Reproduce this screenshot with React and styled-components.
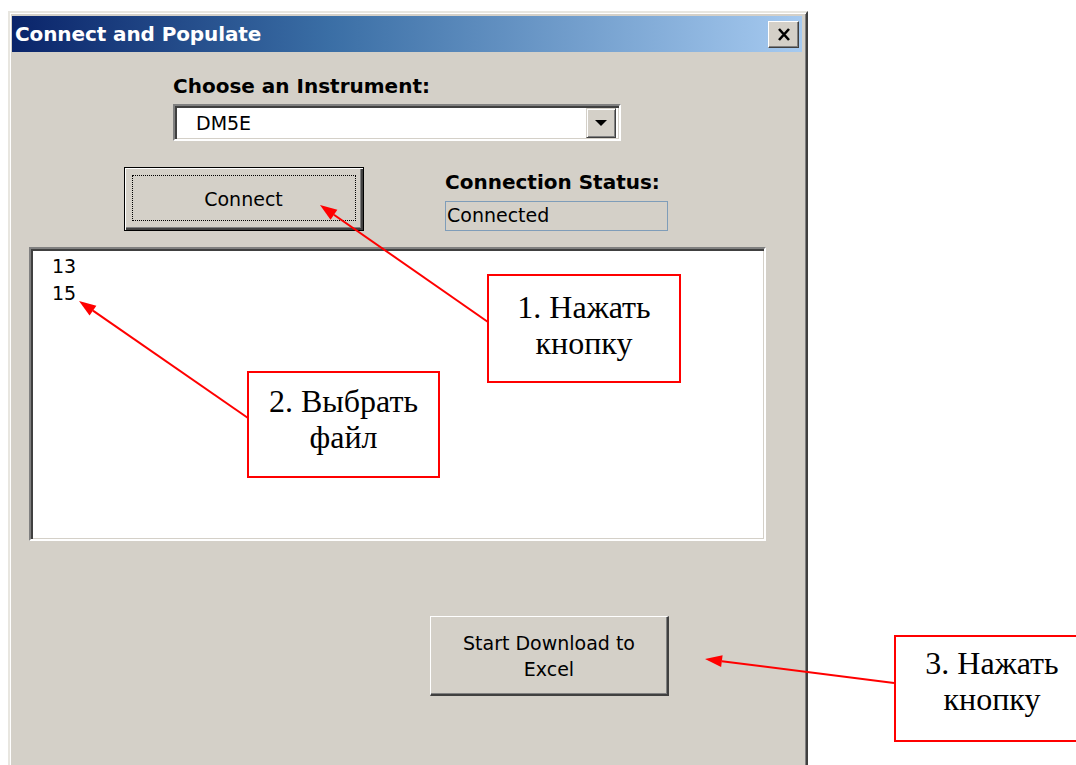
import React from "react";
import styled, { createGlobalStyle } from "styled-components";

const GlobalStyle = createGlobalStyle`
  html, body {
    margin: 0;
    padding: 0;
    background: #ffffff;
    overflow: hidden;
  }
  * { box-sizing: border-box; }
`;

const Page = styled.div`
  position: relative;
  width: 1076px;
  height: 765px;
  overflow: hidden;
  padding: 11px 0 0 8px;
  font-family: "DejaVu Sans", "Liberation Sans", sans-serif;
`;

/* ---------- dialog window ---------- */

const Window = styled.div`
  width: 800px;
  height: 780px;
  display: flex;
  flex-direction: column;
  background: #d4d0c8;
  border-style: solid;
  border-width: 2px;
  border-color: #e8e6e0 #404040 #404040 #e8e6e0;
  padding: 3px 4px 0 2px;
  box-shadow: inset 1px 1px 0 #ffffff, inset -1px 0 0 #808080;
`;

const TitleBar = styled.div`
  height: 36px;
  display: flex;
  align-items: center;
  justify-content: space-between;
  padding: 0 3px 0 3px;
  background: linear-gradient(to right, #0a246a 0%, #3a6ea5 40%, #a6caf0 100%);
`;

const Title = styled.span`
  color: #ffffff;
  font-weight: bold;
  font-size: 20px;
  letter-spacing: -0.1px;
`;

const CloseButton = styled.button`
  width: 31px;
  height: 27px;
  padding: 0;
  display: flex;
  align-items: center;
  justify-content: center;
  background: #d4d0c8;
  border-style: solid;
  border-width: 1px;
  border-color: #ffffff #404040 #404040 #ffffff;
  box-shadow: inset -1px -1px 0 #808080;
`;

const Client = styled.div`
  flex: 1;
  display: flex;
  flex-direction: column;
  align-items: flex-start;
`;

const FieldLabel = styled.div`
  font-weight: bold;
  font-size: 20px;
  line-height: 24px;
  color: #000;
  white-space: nowrap;
`;

const InstrumentBlock = styled.div`
  margin: 22px 0 0 161px;
  display: flex;
  flex-direction: column;
  gap: 6px;
`;

const Combo = styled.div`
  width: 448px;
  height: 37px;
  display: flex;
  align-items: center;
  justify-content: space-between;
  background: #ffffff;
  border-style: solid;
  border-width: 2px;
  border-color: #808080 #ffffff #ffffff #808080;
  box-shadow: inset 2px 2px 0 #404040, inset -1px -1px 0 #d4d0c8;
  padding: 0 3px 0 21px;
  font-size: 19px;
  color: #000;
`;

const DropButton = styled.div`
  width: 30px;
  height: 30px;
  display: flex;
  align-items: center;
  justify-content: center;
  background: #d4d0c8;
  border-style: solid;
  border-width: 1px;
  border-color: #d4d0c8 #404040 #404040 #d4d0c8;
  box-shadow: inset 1px 1px 0 #ffffff, inset -1px -1px 0 #808080;
`;

const Triangle = styled.span`
  width: 0;
  height: 0;
  border-left: 6px solid transparent;
  border-right: 6px solid transparent;
  border-top: 6px solid #000;
`;

const ConnectRow = styled.div`
  margin: 26px 0 0 112px;
  display: flex;
  align-items: flex-start;
`;

const PushButton = styled.button`
  width: ${(p) => p.$w}px;
  height: ${(p) => p.$h}px;
  padding: 0;
  background: #d4d0c8;
  font-family: "DejaVu Sans", "Liberation Sans", sans-serif;
  font-size: 19px;
  line-height: 26px;
  color: #000;
  text-align: center;
  border-style: solid;
  border-width: ${(p) => (p.$default ? "1px" : "1px 2px 2px 1px")};
  border-color: ${(p) =>
    p.$default ? "#000" : "#ffffff #404040 #404040 #ffffff"};
  box-shadow: ${(p) =>
    p.$default
      ? "inset 1px 1px 0 #ffffff, inset -2px -2px 0 #404040, inset -3px -3px 0 #808080"
      : "inset -1px -1px 0 #808080"};
  display: flex;
  align-items: center;
  justify-content: center;
`;

const FocusRing = styled.span`
  width: calc(100% - 14px);
  height: calc(100% - 16px);
  margin: -2px 0 0 -1px;
  border: 1px dotted #000;
  display: flex;
  align-items: center;
  justify-content: center;
  padding-top: 1px;
`;

const StatusGroup = styled.div`
  margin-left: 81px;
  padding-top: 3px;
  display: flex;
  flex-direction: column;
  gap: 7px;
`;

const StatusBox = styled.div`
  width: 223px;
  height: 30px;
  border: 1px solid #7f9db9;
  background: #d4d0c8;
  font-size: 19px;
  line-height: 27px;
  padding-left: 1px;
  color: #000;
`;

const ListBox = styled.div`
  margin: 16px 0 0 17px;
  width: 737px;
  height: 294px;
  background: #ffffff;
  border-style: solid;
  border-width: 2px;
  border-color: #808080 #ffffff #ffffff #808080;
  box-shadow: inset 2px 2px 0 #404040, inset -1px -1px 0 #d4d0c8;
  padding: 4px 0 0 21px;
`;

const ListItem = styled.div`
  font-size: 19px;
  line-height: 27px;
  color: #000;
`;

const Footer = styled.div`
  margin: 75px 0 0 418px;
`;

/* ---------- callouts drawn over the dialog ---------- */

const Overlay = styled.svg`
  position: absolute;
  left: 0;
  top: 0;
  width: 1076px;
  height: 765px;
  pointer-events: none;
`;

const Callout = styled.div`
  position: absolute;
  left: ${(p) => p.$x}px;
  top: ${(p) => p.$y}px;
  width: ${(p) => p.$w}px;
  height: ${(p) => p.$h}px;
  border: 2px solid #ff0000;
  background: #ffffff;
  font-family: "Liberation Serif", "Times New Roman", serif;
  font-size: 32px;
  line-height: 36px;
  color: #000;
  text-align: center;
  padding-top: ${(p) => p.$pt}px;
`;

function Arrow({ x1, y1, x2, y2 }) {
  const a = Math.atan2(y2 - y1, x2 - x1);
  const len = 17;
  const half = 6;
  const bx = x2 - len * Math.cos(a);
  const by = y2 - len * Math.sin(a);
  const px = -Math.sin(a) * half;
  const py = Math.cos(a) * half;
  return (
    <g>
      <line x1={x1} y1={y1} x2={bx} y2={by} stroke="#ff0000" strokeWidth="2" />
      <polygon
        points={`${x2},${y2} ${bx + px},${by + py} ${bx - px},${by - py}`}
        fill="#ff0000"
      />
    </g>
  );
}

function CloseGlyph() {
  return (
    <svg width="14" height="13" viewBox="0 0 14 13">
      <path d="M2 1 L12 12 M12 1 L2 12" stroke="#000" strokeWidth="2.6" />
    </svg>
  );
}

export default function App() {
  return (
    <>
      <GlobalStyle />
      <Page>
        <Window>
          <TitleBar>
            <Title>Connect and Populate</Title>
            <CloseButton aria-label="Close">
              <CloseGlyph />
            </CloseButton>
          </TitleBar>
          <Client>
            <InstrumentBlock>
              <FieldLabel>Choose an Instrument:</FieldLabel>
              <Combo>
                <span>DM5E</span>
                <DropButton>
                  <Triangle />
                </DropButton>
              </Combo>
            </InstrumentBlock>

            <ConnectRow>
              <PushButton $default $w={240} $h={64}>
                <FocusRing>Connect</FocusRing>
              </PushButton>
              <StatusGroup>
                <FieldLabel>Connection Status:</FieldLabel>
                <StatusBox>Connected</StatusBox>
              </StatusGroup>
            </ConnectRow>

            <ListBox>
              <ListItem>13</ListItem>
              <ListItem>15</ListItem>
            </ListBox>

            <Footer>
              <PushButton $w={239} $h={80}>
                Start Download to
                <br />
                Excel
              </PushButton>
            </Footer>
          </Client>
        </Window>

        <Overlay viewBox="0 0 1076 765">
          <Arrow x1={488} y1={322} x2={320} y2={205} />
          <Arrow x1={248} y1={418} x2={79} y2={301} />
          <Arrow x1={894} y1={683} x2={705} y2={659} />
        </Overlay>

        <Callout $x={487} $y={274} $w={194} $h={109} $pt={13}>
          1. Нажать
          <br />
          кнопку
        </Callout>
        <Callout $x={247} $y={371} $w={193} $h={107} $pt={10}>
          2. Выбрать
          <br />
          файл
        </Callout>
        <Callout $x={894} $y={635} $w={196} $h={107} $pt={8}>
          3. Нажать
          <br />
          кнопку
        </Callout>
      </Page>
    </>
  );
}
